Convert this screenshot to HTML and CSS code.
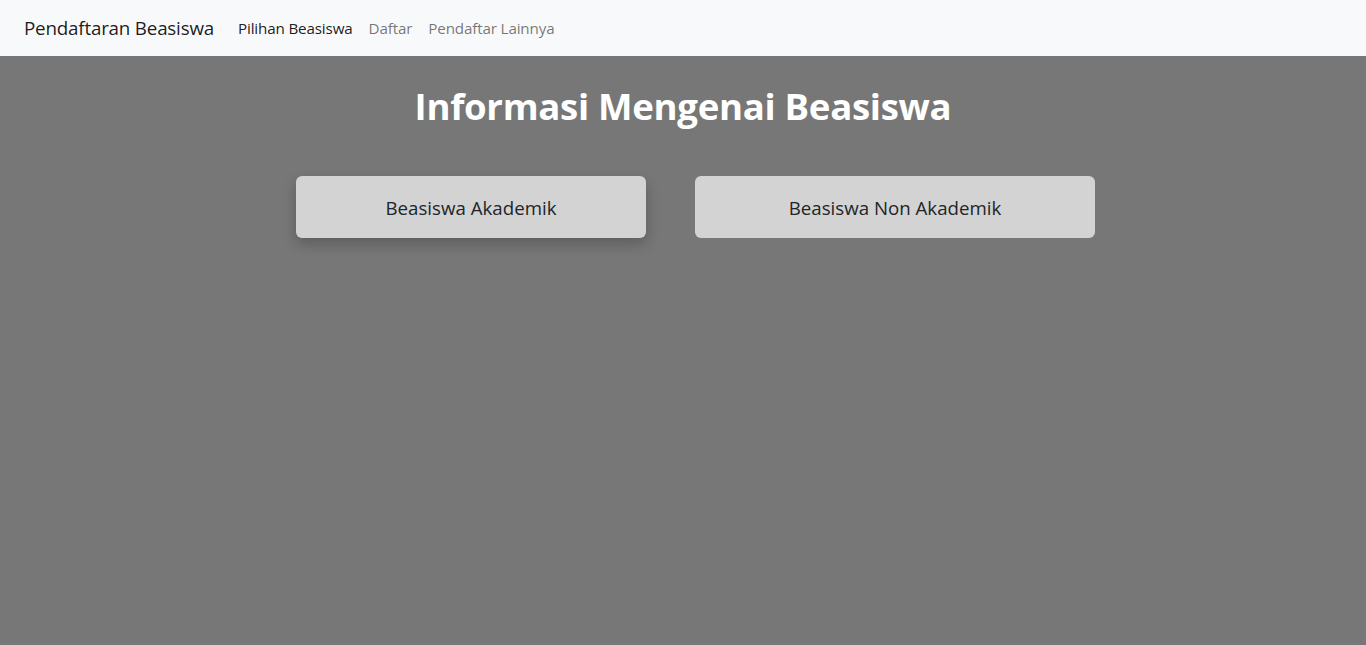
FILE: index.html
```html
<!DOCTYPE html>
<html lang="id">
<head>
<meta charset="utf-8">
<title>Pendaftaran Beasiswa</title>
<link rel="stylesheet" href="styles.css">
</head>
<body>
<nav class="navbar">
  <a class="brand" href="#">Pendaftaran Beasiswa</a>
  <ul class="nav">
    <li><a class="nav-link active" href="#">Pilihan Beasiswa</a></li>
    <li><a class="nav-link" href="#">Daftar</a></li>
    <li><a class="nav-link" href="#">Pendaftar Lainnya</a></li>
  </ul>
</nav>
<main class="main">
  <h1 class="title">Informasi Mengenai Beasiswa</h1>
  <div class="options">
    <a class="option option-hover" href="#">Beasiswa Akademik</a>
    <a class="option option-wide" href="#">Beasiswa Non Akademik</a>
  </div>
</main>
</body>
</html>
```
FILE: styles.css
```css
* { box-sizing: border-box; }
html, body { height: 100%; }
body {
  margin: 0;
  font-family: "Open Sans", "Noto Sans", sans-serif;
  background: #777777;
  display: flex;
  flex-direction: column;
}
.navbar {
  height: 56px;
  background: #f8f9fa;
  display: flex;
  align-items: center;
  padding: 0 24px;
  flex-shrink: 0;
}
.brand {
  font-size: 18.8px;
  color: rgba(0,0,0,.9);
  text-decoration: none;
  margin-right: 16px;
  letter-spacing: -0.2px;
}
.nav {
  list-style: none;
  margin: 0;
  padding: 0;
  display: flex;
}
.nav-link {
  display: block;
  padding: 8px;
  font-size: 15.2px;
  color: rgba(0,0,0,.55);
  text-decoration: none;
  letter-spacing: -0.15px;
}
.nav-link.active { color: rgba(0,0,0,.9); }
.main {
  flex: 1;
  display: flex;
  flex-direction: column;
  align-items: center;
}
.title {
  margin: 26px 0 0;
  font-size: 36.6px;
  font-weight: 700;
  color: #fff;
  line-height: 48px;
  letter-spacing: -0.3px;
}
.options {
  margin-top: 46px;
  display: flex;
  gap: 49px;
  padding-left: 25px;
}
.option {
  height: 62px;
  background: #d3d3d3;
  border-radius: 6px;
  display: flex;
  align-items: center;
  justify-content: center;
  font-size: 18.7px;
  color: #212529;
  text-decoration: none;
  width: 350px;
}
.option-wide { width: 400px; }
.option-hover { box-shadow: 0 6px 14px rgba(0,0,0,.22); }
```
